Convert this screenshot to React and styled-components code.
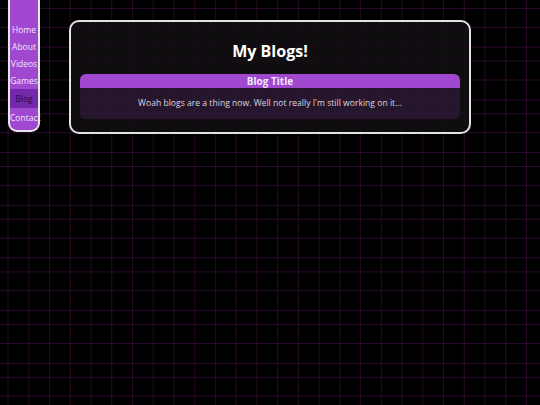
import { createGlobalStyle, styled } from "styled-components"

const GlobalStyle = createGlobalStyle`
  html, body {
    margin: 0;
    padding: 0;
  }

  body {
    min-height: 405px;
    background-color: #000;
    background-image:
      linear-gradient(90deg, rgba(120, 28, 120, 0.32) 0 1px, transparent 1px),
      linear-gradient(180deg, rgba(120, 28, 120, 0.34) 0 1px, transparent 1px 14px, rgba(120, 28, 120, 0.34) 14px 15px, transparent 15px 33px, rgba(120, 28, 120, 0.34) 33px 34px, transparent 34px);
    background-size: 20.74px 100%, 100% 52.7px;
    background-position: 7.6px 0, 0 -6px;
    font-family: "Comic Sans MS", "Open Sans", sans-serif;
  }
`

const StyledPage = styled.div`
  display: flex;
  align-items: flex-start;
  padding-left: 8px;
`

const StyledNav = styled.nav`
  width: 32px;
  height: 132px;
  padding-top: 21px;
  box-sizing: border-box;
  display: flex;
  flex-direction: column;
  background-color: rgba(160, 72, 208, 1);
  border: 2px solid #e6e6e6;
  border-top: none;
  border-radius: 0 0 9px 9px;
`

const StyledNavLink = styled.a`
  position: relative;
  display: block;
  height: ${({ $active }) => ($active ? "19px" : "17px")};
  line-height: ${({ $active }) => ($active ? "19px" : "17px")};
  margin-bottom: ${({ $active }) => ($active ? "1px" : "0")};
  text-align: center;
  white-space: nowrap;
  font-size: 8.5px;
  color: ${({ $active }) => ($active ? "#2a0b42" : "#f2e6fa")};
  background-color: ${({ $active }) => ($active ? "rgba(116, 40, 170, 1)" : "transparent")};
  text-decoration: none;
`

const StyledCard = styled.main`
  margin: 20px 0 0 29px;
  width: 402px;
  box-sizing: border-box;
  padding: 0 9px 13px;
  background-color: rgba(18, 16, 18, 0.84);
  border: 2px solid #e2e2e2;
  border-radius: 10px;
`

const StyledTitle = styled.h1`
  margin: 16px 0 10px;
  font-size: 16px;
  line-height: 26px;
  font-weight: 700;
  text-align: center;
  color: #fff;
`

const StyledPost = styled.article`
  display: flex;
  flex-direction: column;
  border-radius: 6px;
  overflow: hidden;
  background-color: rgba(160, 72, 208, 0.16);
`

const StyledPostHeader = styled.h2`
  margin: 0;
  height: 14px;
  line-height: 14px;
  font-size: 10px;
  font-weight: 700;
  text-align: center;
  color: #f3e6fb;
  background-color: rgba(160, 72, 208, 1);
`

const StyledPostBody = styled.p`
  margin: 0;
  height: 31px;
  line-height: 31px;
  font-size: 8.6px;
  text-align: center;
  color: #dcd6df;
`

const links = ["Home", "About", "Videos", "Games", "Blog", "Contact"]

const App = () => {
  return (
    <>
      <GlobalStyle />
      <StyledPage>
        <StyledNav>
          {links.map((link) => (
            <StyledNavLink key={link} href="#" $active={link === "Blog"}>{link}</StyledNavLink>
          ))}
        </StyledNav>
        <StyledCard>
          <StyledTitle>My Blogs!</StyledTitle>
          <StyledPost>
            <StyledPostHeader>Blog Title</StyledPostHeader>
            <StyledPostBody>Woah blogs are a thing now. Well not really I'm still working on it...</StyledPostBody>
          </StyledPost>
        </StyledCard>
      </StyledPage>
    </>
  )
}

export default App
